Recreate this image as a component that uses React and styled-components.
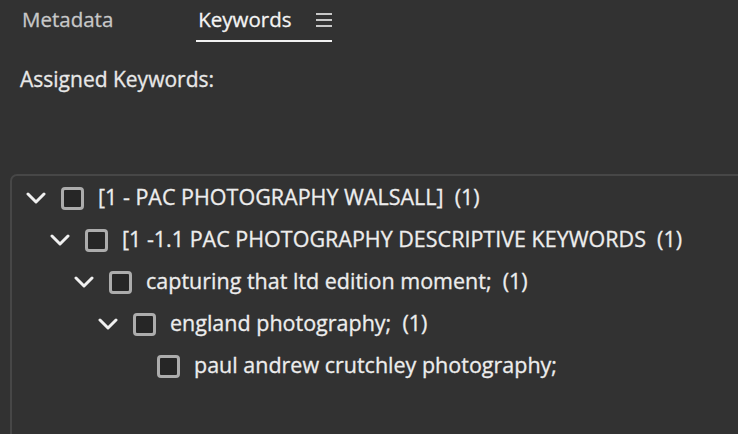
import React from "react";
import styled, { createGlobalStyle } from "styled-components";

const Global = createGlobalStyle`
  html, body { margin: 0; padding: 0; background: #323232; }
  body { width: 738px; height: 434px; overflow: hidden; font-family: "Open Sans", "Noto Sans", sans-serif; }
`;

const Page = styled.div`
  width: 738px;
  height: 434px;
  background: #323232;
  color: #e6e6e6;
  display: flex;
  flex-direction: column;
  overflow: hidden;
  -webkit-text-stroke: 0.3px currentColor;
`;

const TabBar = styled.div`
  display: flex;
  align-items: flex-start;
  height: 43px;
  padding-left: 22px;
`;

const Tab = styled.div`
  display: flex;
  align-items: center;
  gap: 24px;
  font-size: 20.5px;
  height: 40px;
  margin-right: ${p => p.$mr || 0}px;
  color: ${p => (p.$active ? "#f4f4f4" : "#c8c8c8")};
  border-bottom: 2px solid ${p => (p.$active ? "#f2f2f2" : "transparent")};
  padding-left: ${p => (p.$active ? 2 : 0)}px;
`;

const TabLabel = styled.span`
  line-height: 40px;
  margin-top: -2px;
`;

const Label = styled.div`
  font-size: 21px;
  color: #e8e8e8;
  padding: 22px 0 0 20px;
  height: 131px;
  box-sizing: border-box;
`;

const Panel = styled.div`
  margin-left: 10px;
  margin-right: -20px;
  flex: 1;
  border: 2px solid #474747;
  border-radius: 7px 0 0 0;
  border-bottom: none;
  padding-top: 1px;
`;

const Row = styled.div`
  display: flex;
  align-items: center;
  height: 42px;
  padding-left: ${p => 14 + p.$level * 24}px;
  font-size: 21.5px;
  color: #ededed;
  white-space: nowrap;
`;

const Chevron = styled.span`
  width: 22px;
  height: 22px;
  display: flex;
  align-items: center;
  justify-content: flex-start;
  margin-right: 13px;
  visibility: ${p => (p.$hidden ? "hidden" : "visible")};
`;

const Box = styled.span`
  width: 17px;
  height: 17px;
  border: 3px solid #acacac;
  border-radius: 4px;
  background: #262626;
  margin-right: 14px;
  flex-shrink: 0;
`;

const Text = styled.span`
  line-height: 42px;
  margin-top: -3px;
`;

const ChevronIcon = () => (
  <svg width="20" height="12" viewBox="0 0 20 12">
    <path d="M2 2 L10 10 L18 2" fill="none" stroke="#f0f0f0" strokeWidth="3" strokeLinecap="round" strokeLinejoin="round" />
  </svg>
);

const Hamburger = () => (
  <svg width="16" height="16" viewBox="0 0 16 16">
    <rect x="0" y="1" width="16" height="2" fill="#c8c8c8" />
    <rect x="0" y="7" width="16" height="2" fill="#c8c8c8" />
    <rect x="0" y="13" width="16" height="2" fill="#c8c8c8" />
  </svg>
);

const rows = [
  { level: 0, text: "[1 - PAC PHOTOGRAPHY WALSALL]  (1)", open: true },
  { level: 1, text: "[1 -1.1 PAC PHOTOGRAPHY DESCRIPTIVE KEYWORDS  (1)", open: true },
  { level: 2, text: "capturing that ltd edition moment;  (1)", open: true },
  { level: 3, text: "england photography;  (1)", open: true },
  { level: 4, text: "paul andrew crutchley photography;", open: false },
];

export default function App() {
  return (
    <Page>
      <Global />
      <TabBar>
        <Tab $mr={83}><TabLabel>Metadata</TabLabel></Tab>
        <Tab $active>
          <TabLabel>Keywords</TabLabel>
          <Hamburger />
        </Tab>
      </TabBar>
      <Label>Assigned Keywords:</Label>
      <Panel>
        {rows.map((r, i) => (
          <Row key={i} $level={r.level}>
            <Chevron $hidden={!r.open}><ChevronIcon /></Chevron>
            <Box />
            <Text>{r.text.replace(/  /g, "\u00a0 ")}</Text>
          </Row>
        ))}
      </Panel>
    </Page>
  );
}
